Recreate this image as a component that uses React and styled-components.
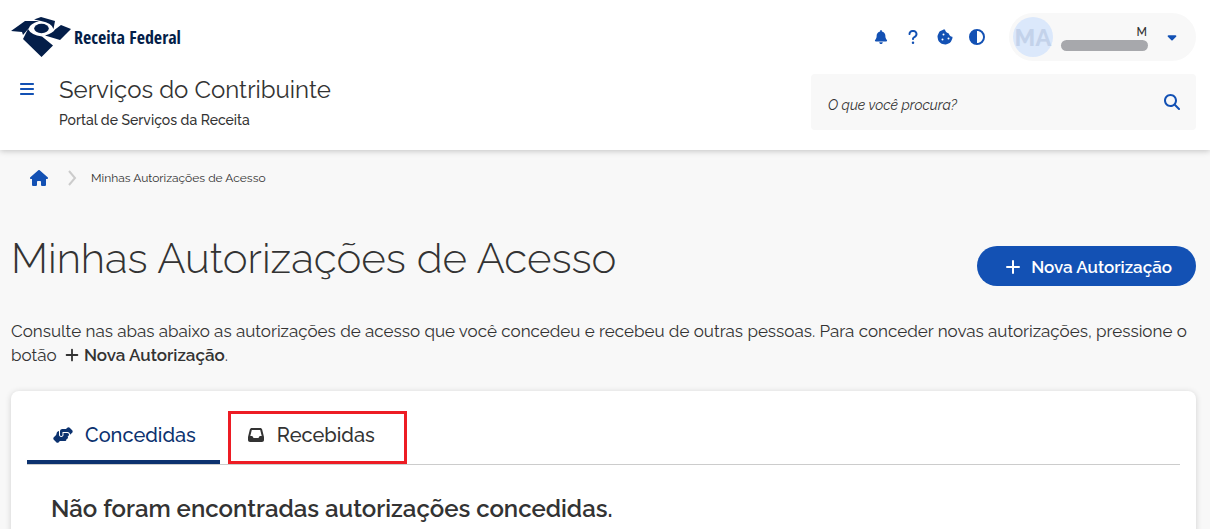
import React from "react";
import styled, { createGlobalStyle } from "styled-components";
import { FaBars, FaBell, FaQuestion, FaCookieBite, FaCircleHalfStroke, FaCaretDown, FaHouse, FaInbox, FaHandshakeAngle, FaMagnifyingGlass } from "react-icons/fa6";

const blue = "#1351b4";
const navy = "#0c326f";
const ink = "#333333";
const highlight = "#ed1c24";

const GlobalStyle = createGlobalStyle`
  *, *::before, *::after { box-sizing: border-box; }
  body { margin: 0; background: #f8f8f8; color: ${ink}; font-family: Raleway, Lato, "Open Sans", sans-serif; font-size: 17px; line-height: 24px; }
  html { overflow: hidden; }
  h1, h2, p { margin: 0; }
  button, input { font: inherit; color: inherit; }
  button { border: 0; background: none; padding: 0; cursor: pointer; }
`;

const Header = styled.header`
  display: flex;
  flex-direction: column;
  gap: 13px;
  padding: 13px 14px 19px 11px;
  background: #fff;
  box-shadow: 0 1px 6px rgba(0, 0, 0, 0.22);
`;
const HeaderRow = styled.div`
  display: flex;
  justify-content: space-between;
  align-items: ${(p) => p.$align || "center"};
`;
const Brand = styled.a`
  display: flex;
  align-items: center;
  gap: 3px;
  color: #041e49;
  text-decoration: none;
  svg { display: block; }
`;
const BrandName = styled.span`
  font: bold 18px/24px "Open Sans Condensed", "DejaVu Sans Condensed", "Open Sans", sans-serif;
  white-space: nowrap;
`;
const Actions = styled.div`
  display: flex;
  align-items: center;
`;
const IconButton = styled.button`
  display: flex;
  align-items: center;
  justify-content: center;
  width: 32px;
  height: ${(p) => p.$height || 32}px;
  color: ${blue};
  font-size: ${(p) => p.$size || 16}px;
`;
const Account = styled.button`
  display: flex;
  align-items: center;
  width: 187px;
  height: 48px;
  margin-left: 16px;
  padding: 0 17px 0 4px;
  border-radius: 24px;
  background: #f8f8f8;
`;
const Avatar = styled.span`
  width: 40px;
  height: 40px;
  border-radius: 50%;
  background: #dbe8fb;
  color: #c3d2ea;
  font: bold 24px/42px Raleway, Lato, sans-serif;
  text-align: center;
`;
const Person = styled.span`
  display: flex;
  flex-direction: column;
  align-items: flex-end;
  margin-left: 8px;
  font-size: 12px;
  line-height: 16px;
  font-weight: 500;
`;
const Initial = styled.span`
  padding-right: 1px;
`;
const HiddenName = styled.span`
  width: 87px;
  height: 11px;
  border-radius: 6px;
  background: #a7a8ac;
`;
const Caret = styled(FaCaretDown)`
  margin-left: auto;
  color: ${blue};
  font-size: 14px;
`;
const TitleGroup = styled.div`
  display: flex;
  gap: 16px;
`;
const SiteName = styled.div`
  font-size: 24px;
  line-height: 32px;
`;
const SiteTagline = styled.div`
  margin-top: 3px;
  font-size: 14px;
  line-height: 22px;
  font-weight: 500;
`;
const Search = styled.form`
  display: flex;
  align-items: center;
  width: 385px;
  height: 56px;
  padding: 0 8px 0 17px;
  border-radius: 4px;
  background: #f8f8f8;
`;
const SearchInput = styled.input`
  flex: 1;
  min-width: 0;
  height: 100%;
  padding: 5px 0 0;
  border: 0;
  outline: 0;
  background: none;
  font-size: 14px;
  font-style: italic;
  &::placeholder { color: #333; opacity: 1; }
`;
const Main = styled.main`
  padding: 12px 14px 0 11px;
`;
const Breadcrumb = styled.nav`
  display: flex;
  align-items: center;
  height: 32px;
  padding-left: 19px;
  font-size: 12px;
`;
const HomeLink = styled.a`
  display: flex;
  color: ${blue};
  font-size: 18px;
`;
const Separator = styled.svg`
  margin: 0 14px 0 19px;
`;
const TitleRow = styled.div`
  display: flex;
  justify-content: space-between;
  align-items: center;
  margin-top: 37px;
`;
const PageTitle = styled.h1`
  font-size: 42px;
  line-height: 56px;
  font-weight: 300;
`;
const PrimaryButton = styled.button`
  display: flex;
  align-items: center;
  gap: 8px;
  height: 40px;
  margin-top: 14px;
  padding: 1px 24px 0 26px;
  border-radius: 20px;
  background: ${blue};
  color: #fff;
  font-weight: 600;
  white-space: nowrap;
`;
const Intro = styled.p`
  margin-top: 32px;
  strong { font-weight: 600; }
  svg { margin: 0 3px 0 2px; vertical-align: -3px; }
`;
const Card = styled.section`
  margin-top: 24px;
  padding: 20px 16px 24px;
  border-radius: 8px;
  background: #fff;
  box-shadow: 0 1px 6px rgba(0, 0, 0, 0.16);
`;
const Tabs = styled.div`
  display: flex;
  gap: 8px;
  border-bottom: 1px solid #ccc;
`;
const Tab = styled.button`
  display: flex;
  align-items: center;
  gap: 12px;
  height: 53px;
  padding: 0 24px 2px 26px;
  border-bottom: 4px solid ${(p) => (p.$active ? navy : "transparent")};
  color: ${(p) => (p.$active ? navy : ink)};
  font-size: 20px;
  font-weight: 500;
`;
const HighlightedTab = styled(Tab)`
  gap: 13px;
  padding: 0 29px 6px 17px;
  border: 3px solid ${highlight};
  svg { font-size: 16px; }
`;
const EmptyTitle = styled.h2`
  margin: 28px 24px 0;
  font-size: 24px;
  line-height: 32px;
  font-weight: 600;
`;

const Plus = ({ size = 20 }) => (
  <svg width={size} height={size} viewBox="0 0 20 20" fill="none" stroke="currentColor" strokeWidth="2" strokeLinecap="round" aria-hidden="true">
    <path d="M10 4v12M4 10h12" />
  </svg>
);

export default function App() {
  return (
    <>
      <GlobalStyle />
      <Header>
        <HeaderRow>
          <Brand href="#">
            <svg width="60" height="42" viewBox="0 0 60 42" fill="currentColor" aria-hidden="true">
              <path d="M0 15 14 5 28 5Q19 8 18 12L12 19 11 16Z" />
              <path d="M23 3.500 30 1 44 5 42.500 13Q41 7 30 5Z" />
              <ellipse cx="30.500" cy="12.500" rx="7.300" ry="4.700" />
              <path d="M17 13Q20 19 31 20.500L42 29.500 30.500 41 12 23Z" />
              <path d="M50 9 60 13 49 24 34 19.500Q42 17 44 13.500Z" />
            </svg>
            <BrandName>Receita Federal</BrandName>
          </Brand>
          <Actions>
            <IconButton aria-label="Notificações" $size={14}><FaBell /></IconButton>
            <IconButton aria-label="Ajuda"><FaQuestion /></IconButton>
            <IconButton aria-label="Cookies"><FaCookieBite /></IconButton>
            <IconButton aria-label="Alto contraste"><FaCircleHalfStroke /></IconButton>
            <Account aria-label="Conta">
              <Avatar>MA</Avatar>
              <Person><Initial>M</Initial><HiddenName /></Person>
              <Caret />
            </Account>
          </Actions>
        </HeaderRow>
        <HeaderRow $align="flex-start">
          <TitleGroup>
            <IconButton aria-label="Menu" $height={30}><FaBars /></IconButton>
            <div>
              <SiteName>Serviços do Contribuinte</SiteName>
              <SiteTagline>Portal de Serviços da Receita</SiteTagline>
            </div>
          </TitleGroup>
          <Search role="search">
            <SearchInput aria-label="Pesquisar" placeholder="O que você procura?" />
            <IconButton type="button" aria-label="Buscar"><FaMagnifyingGlass /></IconButton>
          </Search>
        </HeaderRow>
      </Header>
      <Main>
        <Breadcrumb aria-label="Navegação">
          <HomeLink href="#" aria-label="Início"><FaHouse /></HomeLink>
          <Separator width="10" height="16" viewBox="0 0 10 16" fill="none" stroke="#ccc" strokeWidth="2"><path d="M2 1 8 8 2 15" /></Separator>
          <span>Minhas Autorizações de Acesso</span>
        </Breadcrumb>
        <TitleRow>
          <PageTitle>Minhas Autorizações de Acesso</PageTitle>
          <PrimaryButton><Plus />Nova Autorização</PrimaryButton>
        </TitleRow>
        <Intro>
          Consulte nas abas abaixo as autorizações de acesso que você concedeu e recebeu de outras pessoas. Para conceder novas autorizações, pressione o botão <Plus size={18} /><strong>Nova Autorização</strong>.
        </Intro>
        <Card>
          <Tabs role="tablist">
            <Tab role="tab" aria-selected="true" $active><FaHandshakeAngle />Concedidas</Tab>
            <HighlightedTab role="tab" aria-selected="false"><FaInbox />Recebidas</HighlightedTab>
          </Tabs>
          <EmptyTitle>Não foram encontradas autorizações concedidas.</EmptyTitle>
        </Card>
      </Main>
    </>
  );
}
